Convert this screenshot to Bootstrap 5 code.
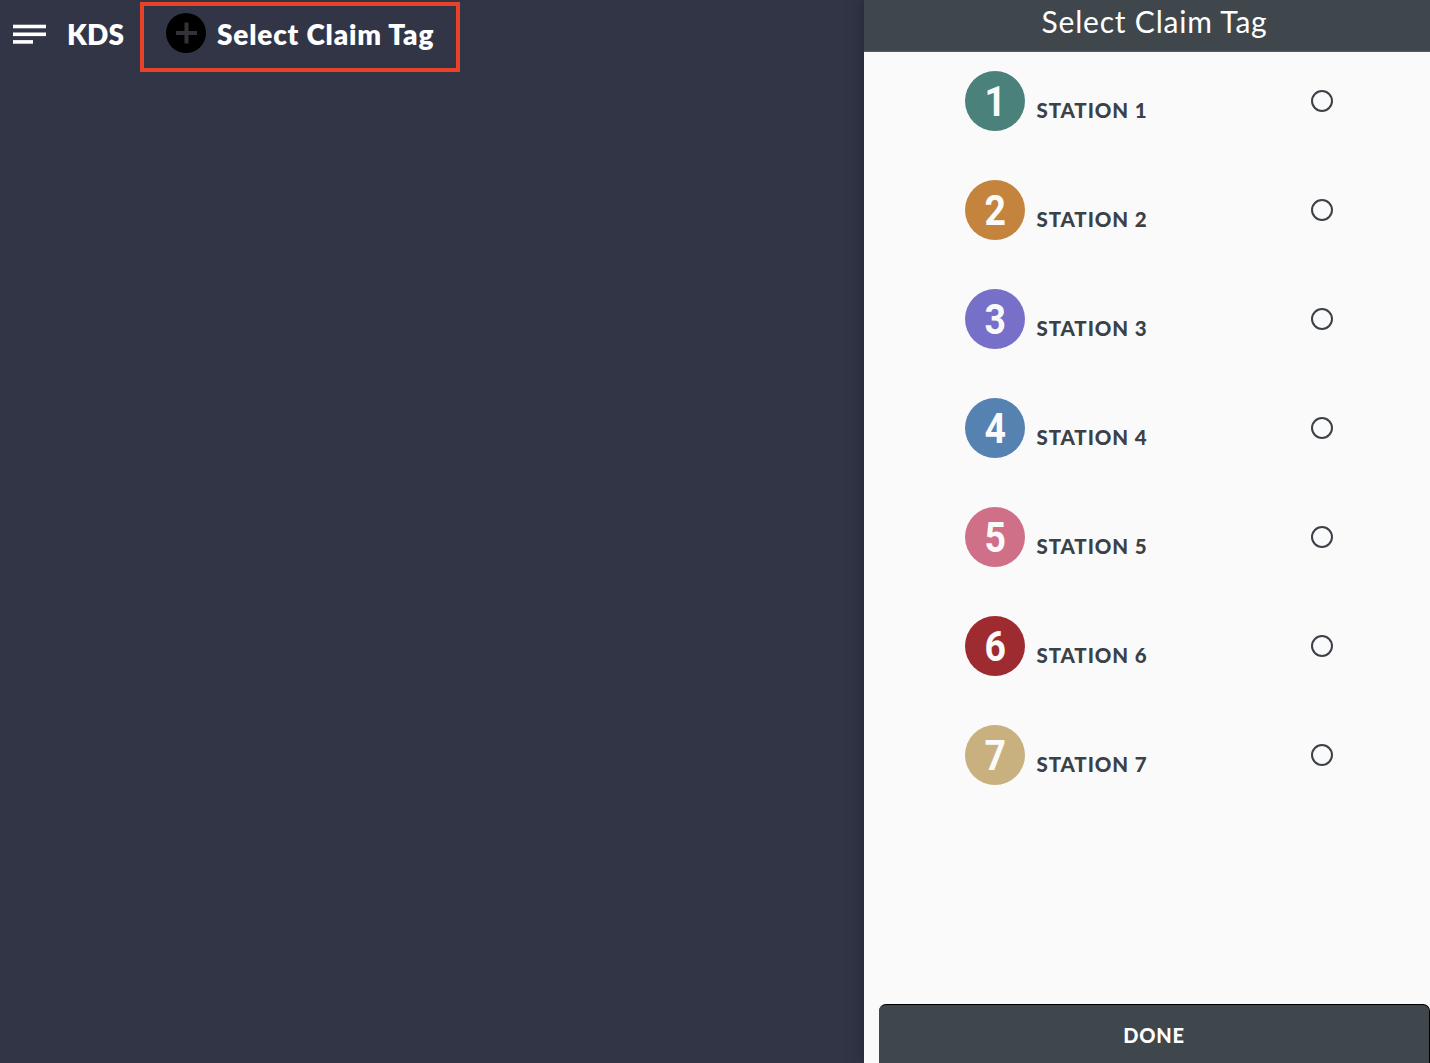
<!DOCTYPE html>
<html lang="en">
<head>
  <meta charset="UTF-8" />
  <meta name="viewport" content="width=device-width, initial-scale=1.0"/>
  <title>KDS - Select Claim Tag</title>
  <link href="https://cdn.jsdelivr.net/npm/bootstrap@5.3.0/dist/css/bootstrap.min.css" rel="stylesheet"/>
  <style>
    body { font-family: Lato, "Open Sans", sans-serif; background: #323546; }
    .kds-bar { padding: 2px 0 0 13px; }
    .menu-btn { width: 33px; height: 20px; margin: 22px 21px 0 0; }
    .kds-name { width: 73px; margin-top: 12px; font-size: 28px; line-height: 40px; font-weight: 800; letter-spacing: .2px; }
    .claim-btn { width: 320px; height: 70px; border: 4px solid #e8432a; border-radius: 0; padding: 7px 0 0 22px; }
    .claim-btn span { margin: 1px 0 0 11px; font-size: 28px; line-height: 40px; font-weight: 800; letter-spacing: .8px; }
    .claim-panel { width: 566px; background: #fafafb; box-shadow: 0 0 14px rgba(20, 24, 34, .6); }
    .claim-head { height: 52px; background: #40474c; border-bottom: 1px solid #565c62; padding: 1px 0 0 15px; }
    .claim-head h1 { font-size: 30px; line-height: 40px; font-weight: 400; letter-spacing: .8px; }
    .stations { gap: 48px; padding: 19px 97px 0 101px; }
    .station { height: 60.9px; }
    .tag-dot { width: 60px; height: 60px; color: #fafafb; }
    .tag-dot span { font: 700 43px/61px Roboto, sans-serif; transform: scaleX(.87); }
    .station-label { margin: 18px 0 0 11.5px; font-size: 20.5px; line-height: 44px; font-weight: 900; letter-spacing: .9px; color: #3b4146; }
    .station .form-check-input { width: 22px; height: 22px; background: transparent; border: 2px solid #3b4146; }
    .done-btn { height: 59px; margin-left: 15px; padding: 1px 0 0; background: #40474c; border: 0; border-top: 1px solid #000; border-right: 1px solid #000; border-radius: 7px 7px 0 0; font-size: 20px; font-weight: 900; letter-spacing: .8px; }
  </style>
</head>
<body>

  <div class="d-flex vh-100 overflow-hidden">
    <main class="flex-grow-1">
      <nav class="kds-bar d-flex align-items-start text-white">
        <svg class="menu-btn" viewBox="0 0 33 20" fill="#fff">
          <rect x="0" y=".7" width="33" height="3.6"/>
          <rect x="0" y="8.5" width="33" height="3.6"/>
          <rect x="0" y="16.1" width="20" height="3.6"/>
        </svg>
        <div class="kds-name">KDS</div>
        <button type="button" class="claim-btn btn text-white d-flex align-items-start">
          <svg width="40" height="40" viewBox="0 0 40 40">
            <circle cx="20" cy="20" r="20" fill="#000"/>
            <path d="M20.5 9.5v21M10 20h21" stroke="#323338" stroke-width="4"/>
          </svg>
          <span>Select Claim Tag</span>
        </button>
      </nav>
    </main>

    <aside class="claim-panel d-flex flex-column flex-shrink-0">
      <header class="claim-head text-white text-center">
        <h1 class="m-0">Select Claim Tag</h1>
      </header>
      <div id="stations" class="stations d-flex flex-column flex-grow-1"></div>
      <button type="button" class="done-btn btn text-white">DONE</button>
    </aside>
  </div>

  <script src="https://cdn.jsdelivr.net/npm/bootstrap@5.3.0/dist/js/bootstrap.bundle.min.js"></script>
  <script>
    const colors = ["#4a817b", "#c4843d", "#7770c8", "#5682b1", "#d07088", "#9e2b30", "#c8b17e"];

    document.getElementById("stations").innerHTML = colors.map((color, i) => `
      <label class="station d-flex align-items-center">
        <span class="tag-dot rounded-circle d-flex justify-content-center" style="background: ${color}"><span>${i + 1}</span></span>
        <span class="station-label">STATION ${i + 1}</span>
        <input class="form-check-input ms-auto mt-0" type="radio" name="station" value="${i + 1}" />
      </label>`).join("");
  </script>
</body>
</html>
